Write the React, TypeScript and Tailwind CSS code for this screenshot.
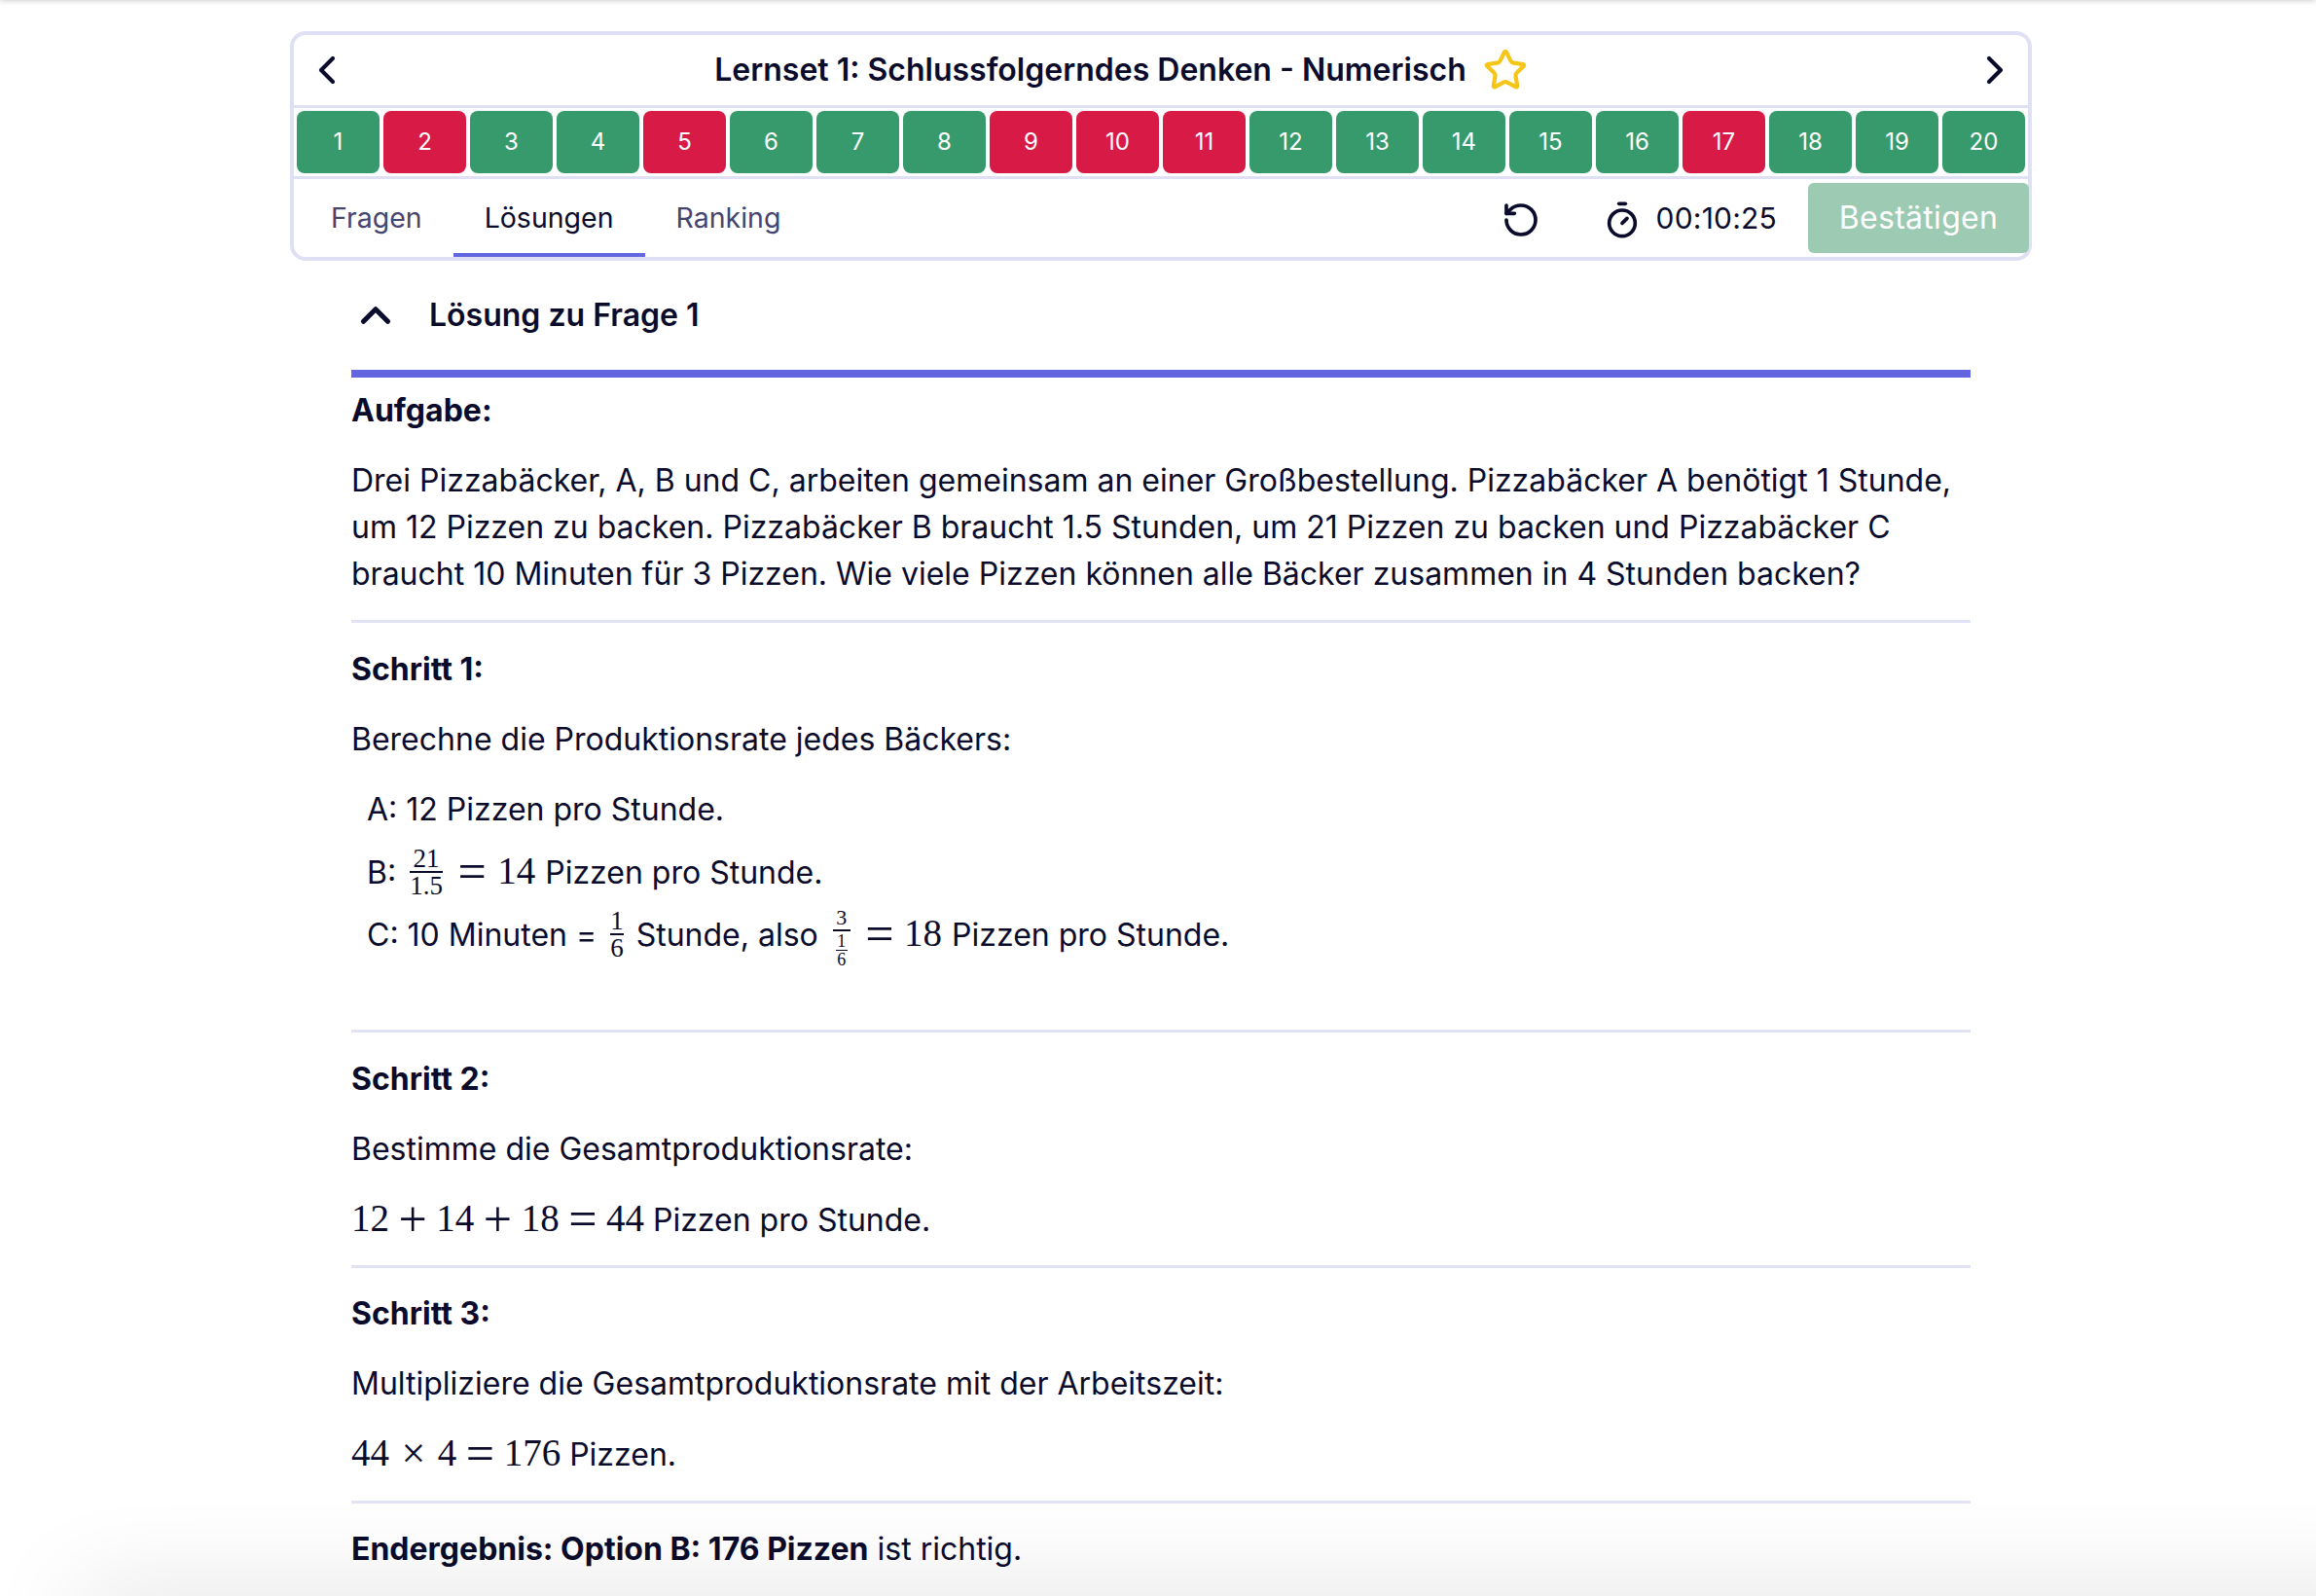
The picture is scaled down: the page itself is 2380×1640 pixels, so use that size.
import React from "react";
import { ChevronLeft, ChevronRight, ChevronUp, Star, RotateCcw, Timer } from "lucide-react";

const red = new Set([2, 5, 9, 10, 11, 17]);
const nums = Array.from({ length: 20 }, (_, i) => i + 1);

function Frac({ n, d, className }: { n: React.ReactNode; d: React.ReactNode; className?: string }) {
  return (
    <span className={`inline-flex flex-col items-center self-center font-['Liberation_Serif',serif] text-[27px] ${className ?? ""}`}>
      <span className="pb-[1px] leading-[24px]">{n}</span>
      <span className="h-[2px] self-stretch bg-[#0b0b2b]" />
      <span className="pt-[1px] leading-[24px]">{d}</span>
    </span>
  );
}

function Op({ children }: { children: React.ReactNode }) {
  return <span className="mx-[9.5px] align-[-5px] text-[52px] leading-[0]">{children}</span>;
}

function M({ children, className }: { children: React.ReactNode; className?: string }) {
  return <span className={`font-['Liberation_Serif',serif] text-[39px] leading-[45px] ${className ?? ""}`}>{children}</span>;
}

function Hr() {
  return <div className="h-[3px] bg-[#e2e2f5]" />;
}

function H({ children }: { children: React.ReactNode }) {
  return <div className="h-[48px] font-bold">{children}</div>;
}

export default function App() {
  return (
    <div className="relative h-[1640px] overflow-hidden bg-white font-['Inter',sans-serif] text-[32px] leading-[48px] text-[#0b0b2b]">
      <div className="ml-[298px] mt-[32px] w-[1790px] rounded-[16px] border-[4px] border-[#e0e0f4] bg-white">
        <div className="flex h-[72px] items-center justify-between px-[10px]">
          <ChevronLeft className="h-[48px] w-[48px]" strokeWidth={2.1} />
          <div className="mr-[82px] flex items-center gap-[17px] font-semibold">
            <span>Lernset 1: Schlussfolgerndes Denken - Numerisch</span>
            <Star className="h-[46px] w-[46px] text-[#f5c518]" strokeWidth={2.2} />
          </div>
          <ChevronRight className="h-[48px] w-[48px]" strokeWidth={2.1} />
        </div>
        <div className="flex gap-[4px] border-y-[3px] border-[#e0e0f4] p-[3px]">
          {nums.map((n) => (
            <div key={n} className={`flex h-[64px] flex-1 items-center justify-center rounded-[8px] text-[24px] text-white ${red.has(n) ? "bg-[#d81b46]" : "bg-[#379a6c]"}`}>
              {n}
            </div>
          ))}
        </div>
        <div className="flex h-[80px] items-center pl-[14px] text-[28.5px]">
          <div className="flex h-full text-[#45456f]">
            <div className="flex items-center pl-[24px] pr-[32px]">Fragen</div>
            <div className="flex items-center border-b-[4px] border-[#6366e0] px-[32px] pt-[4px] text-[#0b0b2b]">Lösungen</div>
            <div className="flex items-center px-[32px]">Ranking</div>
          </div>
          <div className="ml-auto mr-[-1px] flex items-center">
            <RotateCcw className="h-[40px] w-[40px] translate-y-[2px]" strokeWidth={2.2} />
            <Timer className="ml-[64px] h-[40px] w-[40px] translate-y-[2px]" strokeWidth={2.2} />
            <span className="ml-[15px] text-[30px] tracking-[0.2px]">00:10:25</span>
            <button className="ml-[32px] h-[72px] w-[227px] rounded-[6px] bg-[#9ccab2] text-[32px] tracking-[0.3px] text-white">Bestätigen</button>
          </div>
        </div>
      </div>

      <div className="ml-[361px] w-[1664px]">
        <div className="flex h-[112px] items-center font-semibold">
          <ChevronUp className="h-[50px] w-[50px]" strokeWidth={2.5} />
          <span className="ml-[30px]">Lösung zu Frage 1</span>
        </div>
        <div className="h-[8px] bg-[#6366e0]" />
        <div className="pt-[10px]">
          <H>Aufgabe:</H>
          <p className="mb-[23px] mt-[24px]">
            Drei Pizzabäcker, A, B und C, arbeiten gemeinsam an einer Großbestellung. Pizzabäcker A benötigt 1 Stunde, um 12 Pizzen zu backen. Pizzabäcker B braucht 1.5 Stunden, um 21 Pizzen zu backen und Pizzabäcker C braucht 10 Minuten für 3 Pizzen. Wie viele Pizzen können alle Bäcker zusammen in 4 Stunden backen?
          </p>
          <Hr />
        </div>
        <div className="pt-[24px]">
          <H>Schritt 1:</H>
          <p className="mt-[24px]">Berechne die Produktionsrate jedes Bäckers:</p>
          <div className="mt-[24px] h-[250px] pl-[16px]">
            <div className="h-[48px]">A: 12 Pizzen pro Stunde.</div>
            <div className="mt-[16px] flex h-[48px] items-baseline">
              <span>B:</span>
              <Frac n="21" d="1.5" className="ml-[14px]" />
              <M className="ml-[6px]"><Op>=</Op></M>
              <M className="ml-[2px] mr-[10px]">14</M>
              <span>Pizzen pro Stunde.</span>
            </div>
            <div className="mt-[16px] flex h-[48px] items-baseline">
              <span>C: 10 Minuten =</span>
              <Frac n="1" d="6" className="ml-[14px]" />
              <span className="ml-[13px]">Stunde, also</span>
              <span className="ml-[15px] inline-flex translate-y-[3px] flex-col items-center self-center font-['Liberation_Serif',serif] text-[22px]">
                <span className="leading-[22px]">3</span>
                <span className="mb-[2px] mt-[1px] h-[2px] w-[18px] bg-[#0b0b2b]" />
                <span className="text-[18px] leading-[16px]">1</span>
                <span className="my-[1px] h-[1px] w-[12px] bg-[#0b0b2b]" />
                <span className="text-[18px] leading-[16px]">6</span>
              </span>
              <M className="ml-[6px]"><Op>=</Op></M>
              <M className="ml-[1px] mr-[10px]">18</M>
              <span>Pizzen pro Stunde.</span>
            </div>
          </div>
          <Hr />
        </div>
        <div className="pt-[24px]">
          <H>Schritt 2:</H>
          <p className="mt-[24px]">Bestimme die Gesamtproduktionsrate:</p>
          <p className="mb-[23px] mt-[24px] h-[48px]">
            <M>12<Op>+</Op>14<Op>+</Op>18<Op>=</Op>44</M> Pizzen pro Stunde.
          </p>
          <Hr />
        </div>
        <div className="pt-[23px]">
          <H>Schritt 3:</H>
          <p className="mt-[24px]">Multipliziere die Gesamtproduktionsrate mit der Arbeitszeit:</p>
          <p className="mb-[24px] mt-[24px] h-[48px]">
            <M>44<span className="mx-[12.5px] align-[-2px] text-[44px] leading-[0]">×</span>4<Op>=</Op>176</M> Pizzen.
          </p>
          <Hr />
        </div>
        <p className="pt-[23px]"><span className="font-bold">Endergebnis: Option B: 176 Pizzen</span> ist richtig.</p>
      </div>
      <div className="absolute left-0 right-0 top-[-10px] h-[10px] shadow-[0_0_6px_rgba(0,0,0,0.25)]" />
      <div className="absolute bottom-[-50px] left-[80px] right-[-100px] h-[50px] shadow-[0_0_100px_rgba(0,0,0,0.15)]" />
    </div>
  );
}
